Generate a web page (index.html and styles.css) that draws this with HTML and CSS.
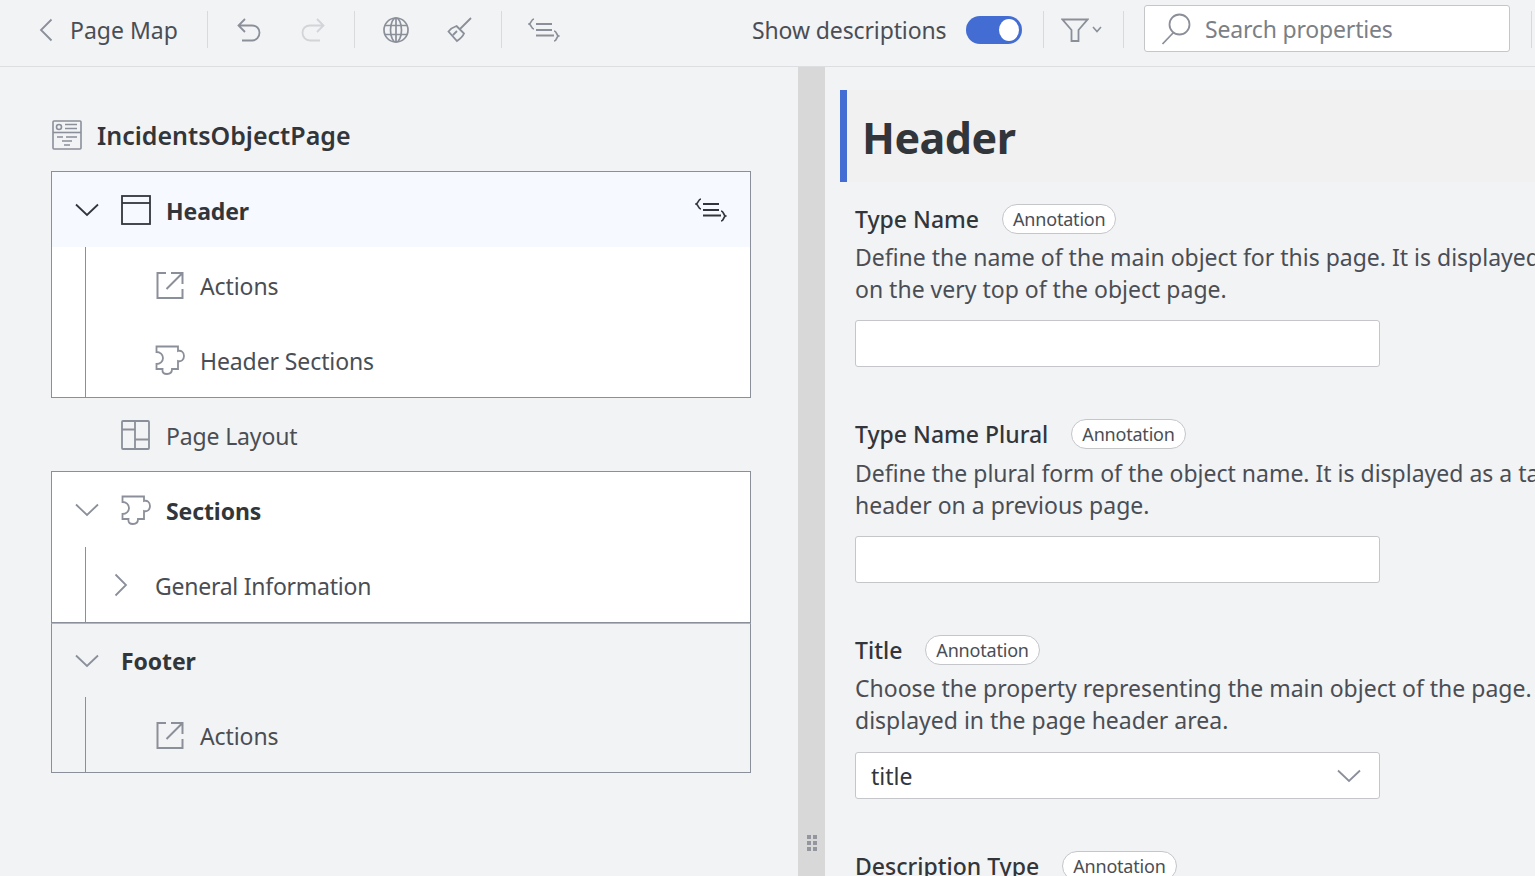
FILE: index.html
```html
<!DOCTYPE html>
<html lang="en">
<head>
    <meta charset="UTF-8">
    <title>Page Map</title>
    <link rel="stylesheet" href="styles.css">
</head>
<body>
    <svg class="defs" width="0" height="0">
        <symbol id="i-code" viewBox="0 0 32 26">
            <path d="M6 2 C3 2 4 6 1 7 C4 8 3 12 6 12" fill="none" stroke-width="1.700" />
            <path d="M8 7 H24 M8 13 H24 M8 18.500 H26" fill="none" stroke-width="2" />
            <path d="M26 14 C29 14 28 18 30.500 19 C28 20 29 24 26 24" fill="none" stroke-width="1.700" />
        </symbol>
        <symbol id="i-action" viewBox="0 0 30 30">
            <path d="M11 3 H2.500 V28 H27.500 V19 M16 3 H27.500 V14 M11.500 19 L27 3.500" stroke-width="2" fill="none" />
        </symbol>
        <symbol id="i-puzzle" viewBox="0 0 30 30">
            <path d="M1.500 1.500 H23 V6 C26 5 29 7 29 11 C29 15 26 17 23 16 V24 H17 C17 28 15 29 12 29 C9 29 7 28 7.500 24 H1.500 V19 C5 19 8 16.500 8 13 C8 9.500 5 7 1.500 7 Z" fill="none" stroke-width="1.800" />
        </symbol>
        <symbol id="i-chevron-down" viewBox="0 0 24 14">
            <path d="M1 1.500 L12 12 L23 1.500" fill="none" stroke-width="1.800" />
        </symbol>
    </svg>

    <div class="toolbar">
        <svg class="back icon-gray" width="14" height="24" viewBox="0 0 14 24"><path d="M12.500 1.500 L2 12 L12.500 22.500" fill="none" stroke-width="1.800" /></svg>
        <span class="toolbar-title">Page Map</span>
        <span class="tb-sep sep-a"></span>
        <svg class="tb-icon icon-gray undo" width="24" height="24" viewBox="0 0 24 24"><path d="M8 1 L1.500 7.500 L8 14 M2 7.500 H15 C19.500 7.500 22.500 10.500 22.500 14.500 C22.500 19 19.500 22.500 15 22.500 H5" fill="none" stroke-width="1.800" /></svg>
        <svg class="tb-icon icon-off redo" width="24" height="24" viewBox="0 0 24 24"><path d="M16 1 L22.500 7.500 L16 14 M22 7.500 H9 C4.500 7.500 1.500 10.500 1.500 14.500 C1.500 19 4.500 22.500 9 22.500 H19" fill="none" stroke-width="1.800" /></svg>
        <span class="tb-sep sep-b"></span>
        <svg class="tb-icon icon-gray globe" width="26" height="26" viewBox="0 0 26 26"><g fill="none" stroke-width="1.700"><circle cx="13" cy="13" r="12" /><ellipse cx="13" cy="13" rx="5.500" ry="12" /><path d="M13 1 V25 M2 8.500 H24 M2 17.500 H24" /></g></svg>
        <svg class="tb-icon icon-gray brush" width="26" height="26" viewBox="0 0 26 26"><path d="M24 1 L13 12 M9.500 9 L17 16.500 C16 19 13 22 10 24 L1.500 14.500 C3.500 12 6.500 10 9.500 9 Z M6 18 L10 14" fill="none" stroke-width="1.800" /></svg>
        <span class="tb-sep sep-c"></span>
        <svg class="tb-icon icon-gray code-icon" width="32" height="26"><use href="#i-code" /></svg>

        <span class="toolbar-label">Show descriptions</span>
        <span class="toggle"><span class="toggle-thumb"></span></span>
        <span class="tb-sep sep-d"></span>
        <svg class="tb-icon icon-gray filter" width="28" height="24" viewBox="0 0 28 24"><path d="M1.500 1.500 H26.500 L17.500 12 V23 H10.500 V12 Z" fill="none" stroke-width="1.800" /></svg>
        <svg class="tb-icon icon-gray filter-caret" width="10" height="7" viewBox="0 0 10 7"><path d="M1 1 L5 5.500 L9 1" fill="none" stroke-width="1.600" /></svg>
        <span class="tb-sep sep-e"></span>
        <div class="search">
            <svg class="icon-gray" width="30" height="32" viewBox="0 0 30 32"><g fill="none" stroke-width="1.800"><circle cx="18.500" cy="11.500" r="10" /><path d="M12.500 19.500 L1.500 31" /></g></svg>
            <span class="search-text">Search properties</span>
        </div>
        <span class="tb-sep sep-f"></span>
    </div>

    <div class="main">
        <div class="left-pane">
            <div class="page-title">
                <svg class="icon-gray" width="30" height="30" viewBox="0 0 30 30"><g fill="none" stroke-width="1.600"><rect x="1" y="1" width="28" height="28" rx="1" /><path d="M1 12.500 H29" /><circle cx="7" cy="7" r="2.500" /><path d="M13 4.500 H25 M13 8.500 H25 M5 17 H11 M14 17 H25 M10 21 H20 M12 25 H18" /></g></svg>
                <span>IncidentsObjectPage</span>
            </div>

            <div class="tree-card card-white">
                <div class="tree-head head-active">
                    <svg class="caret icon-dark" width="24" height="14"><use href="#i-chevron-down" /></svg>
                    <svg class="head-icon icon-dark" width="30" height="30" viewBox="0 0 30 30"><g fill="none" stroke-width="1.800"><rect x="1" y="1" width="28" height="28" /><path d="M1 8 H29" /></g></svg>
                    <span class="head-text">Header</span>
                    <svg class="head-end icon-dark" width="32" height="26"><use href="#i-code" /></svg>
                </div>
                <div class="tree-children">
                    <div class="tree-row">
                        <svg class="row-icon icon-gray" width="30" height="30"><use href="#i-action" /></svg>
                        <span>Actions</span>
                    </div>
                    <div class="tree-row">
                        <svg class="row-icon icon-gray" width="30" height="30"><use href="#i-puzzle" /></svg>
                        <span>Header Sections</span>
                    </div>
                </div>
            </div>

            <div class="loose-row">
                <svg class="icon-gray" width="30" height="30" viewBox="0 0 30 30"><g fill="none" stroke-width="1.800"><rect x="1" y="1" width="27" height="28" rx="1" /><path d="M14 1 V29 M1 9.500 H14 M14 19.500 H28" /></g></svg>
                <span>Page Layout</span>
            </div>

            <div class="tree-card card-white">
                <div class="tree-head">
                    <svg class="caret icon-gray" width="24" height="14"><use href="#i-chevron-down" /></svg>
                    <svg class="head-icon icon-gray" width="30" height="30"><use href="#i-puzzle" /></svg>
                    <span class="head-text">Sections</span>
                </div>
                <div class="tree-children">
                    <div class="tree-row row-nested">
                        <svg class="icon-gray" width="14" height="24" viewBox="0 0 14 24"><path d="M1.500 1.500 L12 12 L1.500 22.500" fill="none" stroke-width="1.800" /></svg>
                        <span>General Information</span>
                    </div>
                </div>
            </div>

            <div class="tree-card card-joined">
                <div class="tree-head">
                    <svg class="caret icon-gray" width="24" height="14"><use href="#i-chevron-down" /></svg>
                    <span class="head-text">Footer</span>
                </div>
                <div class="tree-children">
                    <div class="tree-row">
                        <svg class="row-icon icon-gray" width="30" height="30"><use href="#i-action" /></svg>
                        <span>Actions</span>
                    </div>
                </div>
            </div>
        </div>

        <div class="splitter">
            <div class="grip">
                <i></i><i></i><i></i><i></i><i></i><i></i>
            </div>
        </div>

        <div class="right-pane">
            <div class="section-title">Header</div>

            <div class="field">
                <div class="field-head"><span class="field-label">Type Name</span><span class="badge">Annotation</span></div>
                <p class="field-desc">Define the name of the main object for this page. It is displayed<br>on the very top of the object page.</p>
                <div class="input"></div>
            </div>

            <div class="field">
                <div class="field-head"><span class="field-label">Type Name Plural</span><span class="badge">Annotation</span></div>
                <p class="field-desc">Define the plural form of the object name. It is displayed as a table<br>header on a previous page.</p>
                <div class="input"></div>
            </div>

            <div class="field">
                <div class="field-head"><span class="field-label">Title</span><span class="badge">Annotation</span></div>
                <p class="field-desc">Choose the property representing the main object of the page. It is<br>displayed in the page header area.</p>
                <div class="input input-select">
                    <span>title</span>
                    <svg class="icon-gray" width="24" height="14"><use href="#i-chevron-down" /></svg>
                </div>
            </div>

            <div class="field">
                <div class="field-head"><span class="field-label">Description Type</span><span class="badge">Annotation</span></div>
            </div>
        </div>
    </div>
</body>
</html>
```

FILE: styles.css
```css
html, body {
    height: 100%;
}
body {
    margin: 0;
    overflow: hidden;
    background-color: #f2f3f5;
    color: #32363a;
    font-family: "Noto Sans", "Open Sans", sans-serif;
    font-size: 23px;
}
.defs {
    position: absolute;
}
.icon-gray {
    stroke: #8b8f99;
}
.icon-dark {
    stroke: #32363a;
}
.icon-off {
    stroke: #d2d4d8;
}
svg {
    flex: none;
    display: block;
}

/* top bar */
.toolbar {
    display: flex;
    align-items: center;
    height: 59px;
    padding: 0 0 7px 39px;
    border-bottom: 1px solid #dcdee1;
}
.toolbar-title {
    margin-left: 17px;
    width: 107px;
    white-space: nowrap;
    color: #4a4e54;
}
.tb-sep {
    flex: none;
    width: 1px;
    height: 37px;
    background-color: #d8dadd;
}
.sep-a { margin-left: 30px; }
.undo { margin-left: 29px; }
.redo { margin-left: 40px; }
.sep-b { margin-left: 29px; }
.globe { margin-left: 28px; }
.brush { margin-left: 38px; }
.sep-c { margin-left: 28px; }
.code-icon { margin-left: 26px; }
.toolbar-label {
    margin-left: 192px;
    width: 195px;
    white-space: nowrap;
    letter-spacing: -0.12px;
    color: #4a4e54;
}
.toggle {
    flex: none;
    display: flex;
    align-items: center;
    justify-content: flex-end;
    width: 56px;
    height: 28px;
    margin-left: 19px;
    padding-right: 3px;
    box-sizing: border-box;
    border-radius: 14px;
    background-color: #436dd3;
}
.toggle-thumb {
    width: 20px;
    height: 22px;
    border-radius: 50%;
    background-color: #fff;
}
.sep-d { margin-left: 21px; }
.filter { margin-left: 17px; }
.filter-caret { margin-left: 3px; }
.sep-e { margin-left: 21px; }
.search {
    flex: none;
    display: flex;
    align-items: center;
    gap: 14px;
    width: 366px;
    height: 47px;
    margin: 0 0 2px 20px;
    padding-left: 16px;
    box-sizing: border-box;
    border: 1px solid #c4c6ca;
    border-radius: 3px;
    background-color: #fff;
}
.search-text {
    color: #7b7f86;
    white-space: nowrap;
    letter-spacing: -0.18px;
}
.sep-f { margin-left: 21px; }

/* panes */
.main {
    display: flex;
    height: calc(100% - 67px);
}
.left-pane {
    flex: none;
    width: 798px;
    box-sizing: border-box;
    padding: 38px 47px 0 51px;
}
.splitter {
    flex: none;
    position: relative;
    width: 27px;
    background-color: #d8d8d8;
}
.grip {
    position: absolute;
    left: 9px;
    bottom: 25px;
    display: grid;
    grid-template-columns: 4px 4px;
    gap: 2px 2px;
}
.grip i {
    width: 4px;
    height: 4px;
    background-color: #93969e;
}
.right-pane {
    flex: 1;
    min-width: 0;
    overflow: hidden;
    padding: 23px 0 0 15px;
}

/* page map tree */
.page-title {
    display: flex;
    align-items: center;
    gap: 15px;
    height: 60px;
    margin-bottom: 6px;
    font-weight: 600;
    font-size: 25px;
}
.page-title svg {
    margin-left: 1px;
}
.tree-card {
    border: 1px solid #8b8f99;
}
.card-white {
    background-color: #fff;
}
.card-joined {
    border-top-color: #b3b6bd;
}
.tree-head {
    display: flex;
    align-items: center;
    height: 75px;
    padding-left: 23px;
}
.card-joined .tree-head {
    height: 73px;
}
.head-active {
    background-color: #f6f9ff;
}
.caret {
    margin-right: 22px;
}
.head-icon {
    margin-right: 15px;
}
.head-text {
    margin-top: 2px;
    font-weight: 700;
    letter-spacing: -0.1px;
}
.card-joined .head-text {
    margin-top: 0;
}
.head-end {
    margin-left: auto;
    margin-right: 23px;
}
.tree-children {
    margin-left: 33px;
    border-left: 1px solid #8b8f99;
}
.tree-row {
    display: flex;
    align-items: center;
    gap: 15px;
    height: 75px;
    padding-left: 69px;
    letter-spacing: -0.1px;
    color: #4a4e54;
}
.tree-row span {
    margin-top: 2px;
}
.tree-row.row-nested {
    padding-left: 28px;
    gap: 27px;
    letter-spacing: -0.25px;
}
.loose-row {
    display: flex;
    align-items: center;
    gap: 15px;
    height: 73px;
    padding-left: 70px;
    letter-spacing: -0.15px;
    color: #4a4e54;
}
.loose-row span {
    margin-top: 2px;
}

/* property form */
.section-title {
    height: 92px;
    line-height: 96px;
    padding-left: 15px;
    border-left: 7px solid #436dd3;
    background-color: #f1f1f1;
    font-size: 43px;
    font-weight: 700;
    letter-spacing: -0.5px;
}
.field {
    padding-left: 15px;
    height: 215.75px;
    white-space: nowrap;
}
.section-title + .field {
    margin-top: 19px;
}
.field-head {
    display: flex;
    align-items: center;
    gap: 23px;
    height: 35.4px;
    margin-bottom: 4.6px;
}
.field-label {
    font-weight: 500;
}
.badge {
    padding: 0 10px;
    height: 30px;
    line-height: 28px;
    box-sizing: border-box;
    border: 1px solid #c4c6ca;
    border-radius: 15px;
    background-color: #fff;
    font-size: 18px;
    letter-spacing: -0.2px;
    color: #4a4e54;
}
.field-desc {
    margin: 0;
    line-height: 32px;
    color: #4a4e54;
}
.input {
    display: flex;
    align-items: center;
    justify-content: space-between;
    width: 525px;
    height: 47px;
    margin-top: 15px;
    box-sizing: border-box;
    border: 1px solid #c4c6ca;
    border-radius: 3px;
    background-color: #fff;
}
.input-select {
    margin-top: 16px;
    padding: 0 18px 0 15px;
}
```
